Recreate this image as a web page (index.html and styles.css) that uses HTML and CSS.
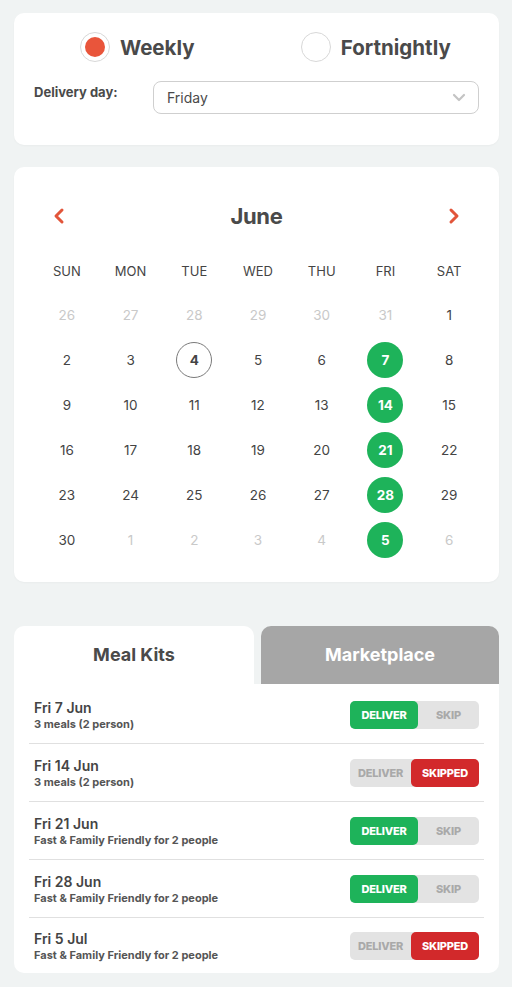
FILE: index.html
```html
<!DOCTYPE html>
<html>
<head>
<meta charset="utf-8">
<link rel="stylesheet" href="styles.css">
</head>
<body>
<div class="page">
  <section class="card freq">
    <div class="radios">
      <label class="radio"><span class="dot on"></span><span class="rlabel">Weekly</span></label>
      <label class="radio"><span class="dot"></span><span class="rlabel">Fortnightly</span></label>
    </div>
    <div class="dayrow">
      <span class="daylabel">Delivery day:</span>
      <div class="select">
        <span>Friday</span>
        <svg class="chev" width="14" height="9" viewBox="0 0 14 9"><path d="M2 2l5 5 5-5" fill="none" stroke="#c4c4c4" stroke-width="2.2" stroke-linecap="round" stroke-linejoin="round"/></svg>
      </div>
    </div>
  </section>

  <section class="card cal">
    <div class="calhead">
      <svg class="arrow" width="14" height="18" viewBox="0 0 14 18"><path d="M10 3L4 9l6 6" fill="none" stroke="#e2553a" stroke-width="3" stroke-linecap="round" stroke-linejoin="round"/></svg>
      <h2 class="month">June</h2>
      <svg class="arrow" width="14" height="18" viewBox="0 0 14 18"><path d="M4 3l6 6-6 6" fill="none" stroke="#e2553a" stroke-width="3" stroke-linecap="round" stroke-linejoin="round"/></svg>
    </div>
    <div class="grid wk">
      <span>SUN</span><span>MON</span><span>TUE</span><span>WED</span><span>THU</span><span>FRI</span><span>SAT</span>
    </div>
    <div class="grid days">
      <span class="d off">26</span><span class="d off">27</span><span class="d off">28</span><span class="d off">29</span><span class="d off">30</span><span class="d off">31</span><span class="d">1</span>
      <span class="d">2</span><span class="d">3</span><span class="d today">4</span><span class="d">5</span><span class="d">6</span><span class="d sel">7</span><span class="d">8</span>
      <span class="d">9</span><span class="d">10</span><span class="d">11</span><span class="d">12</span><span class="d">13</span><span class="d sel">14</span><span class="d">15</span>
      <span class="d">16</span><span class="d">17</span><span class="d">18</span><span class="d">19</span><span class="d">20</span><span class="d sel">21</span><span class="d">22</span>
      <span class="d">23</span><span class="d">24</span><span class="d">25</span><span class="d">26</span><span class="d">27</span><span class="d sel">28</span><span class="d">29</span>
      <span class="d">30</span><span class="d off">1</span><span class="d off">2</span><span class="d off">3</span><span class="d off">4</span><span class="d sel">5</span><span class="d off">6</span>
    </div>
  </section>

  <div class="tabs">
    <div class="tab active">Meal Kits</div>
    <div class="tab">Marketplace</div>
  </div>
  <section class="list">
    <div class="row">
      <div class="info"><div class="date">Fri 7 Jun</div><div class="sub">3 meals (2 person)</div></div>
      <div class="toggle"><span class="seg deliver act">DELIVER</span><span class="seg skip">SKIP</span></div>
    </div>
    <div class="row">
      <div class="info"><div class="date">Fri 14 Jun</div><div class="sub">3 meals (2 person)</div></div>
      <div class="toggle"><span class="seg deliver">DELIVER</span><span class="seg skipped act">SKIPPED</span></div>
    </div>
    <div class="row">
      <div class="info"><div class="date">Fri 21 Jun</div><div class="sub">Fast &amp; Family Friendly for 2 people</div></div>
      <div class="toggle"><span class="seg deliver act">DELIVER</span><span class="seg skip">SKIP</span></div>
    </div>
    <div class="row">
      <div class="info"><div class="date">Fri 28 Jun</div><div class="sub">Fast &amp; Family Friendly for 2 people</div></div>
      <div class="toggle"><span class="seg deliver act">DELIVER</span><span class="seg skip">SKIP</span></div>
    </div>
    <div class="row">
      <div class="info"><div class="date">Fri 5 Jul</div><div class="sub">Fast &amp; Family Friendly for 2 people</div></div>
      <div class="toggle"><span class="seg deliver">DELIVER</span><span class="seg skipped act">SKIPPED</span></div>
    </div>
  </section>
</div>
</body>
</html>
```

FILE: styles.css
```css
* { box-sizing: border-box; margin: 0; padding: 0; }
html, body { background: #f0f3f3; }
body { font-family: Inter, "Noto Sans", sans-serif; color: #444; }
.page { padding: 13px 13px 15px 14px; display: flex; flex-direction: column; }

.card { background: #fff; border-radius: 10px; box-shadow: 0 1px 2px rgba(0,0,0,0.03); }

.freq { padding: 19px 20px 31px; }
.radios { display: grid; grid-template-columns: 1fr 1fr; margin: 0 -20px; }
.radio { display: flex; align-items: center; justify-content: center; gap: 10px; height: 30px; }
.radios .radio:first-child { padding-left: 4px; }
.radios .radio:last-child { padding-right: 4px; }
.dot { width: 30px; height: 30px; border-radius: 50%; border: 1px solid #d8d8d8; background: #fff; display: flex; align-items: center; justify-content: center; }
.dot.on::after { content: ""; width: 20px; height: 20px; border-radius: 50%; background: #e9553b; }
.rlabel { font-size: 20.5px; font-weight: 700; color: #4a4a4a; letter-spacing: 0; }

.dayrow { display: flex; align-items: flex-start; margin-top: 19px; }
.daylabel { width: 119px; font-size: 13px; font-weight: 700; color: #4a4a4a; padding-top: 3px; }
.select { flex: 1; height: 33px; border: 1px solid #cfcfcf; border-radius: 8px; display: flex; align-items: center; justify-content: space-between; padding: 0 12px 0 13px; font-size: 14px; color: #4a4a4a; }

.cal { margin-top: 22px; padding: 34px 18px 20px 21px; }
.calhead { display: flex; align-items: center; justify-content: space-between; height: 30px; padding: 0 20px 0 17px; }
.month { font-size: 22px; font-weight: 700; color: #4a4a4a; letter-spacing: -0.3px; }
.grid { display: grid; grid-template-columns: repeat(7, 1fr); }
.wk { margin-top: 30px; height: 20px; align-items: center; justify-items: center; font-size: 13px; color: #444; }
.days { margin-top: 11px; grid-auto-rows: 45px; align-items: center; justify-items: center; }
.d { width: 36px; height: 36px; border-radius: 50%; display: flex; align-items: center; justify-content: center; font-size: 13.5px; color: #444; }
.d.off { color: #c9c9c9; }
.d.today { border: 1px solid #7a7a7a; font-weight: 700; }
.d.sel { background: #1eb35a; color: #fff; font-weight: 700; }

.tabs { display: flex; gap: 7px; margin-top: 44px; }
.tab { flex: 1; height: 58px; border-radius: 10px 10px 0 0; background: #a6a6a6; color: #fff; display: flex; align-items: center; justify-content: center; font-size: 18px; font-weight: 700; padding-bottom: 2px; }
.tab.active { background: #fff; color: #4a4a4a; flex: 0 0 240px; }

.list { background: #fff; border-radius: 0 0 10px 10px; padding: 2px 15px 0; }
.row { height: 58px; display: flex; align-items: center; justify-content: space-between; padding: 0 5px; border-bottom: 1.5px solid #e0e0e0; }
.row:last-child { border-bottom: none; height: 55px; }
.date { font-size: 14px; font-weight: 600; color: #444; line-height: 17px; }
.sub { font-size: 11px; font-weight: 700; color: #555; line-height: 14px; margin-top: 1px; }
.toggle { display: flex; background: #e3e3e3; border-radius: 5px; height: 28px; }
.seg { display: flex; align-items: center; justify-content: center; font-size: 11px; font-weight: 800; color: #a9a9a9; width: 61px; border-radius: 5px; letter-spacing: -0.2px; }
.seg.act { width: 68px; color: #fff; }
.deliver.act { background: #1eb35a; }
.skipped.act { background: #d2292b; }
```
